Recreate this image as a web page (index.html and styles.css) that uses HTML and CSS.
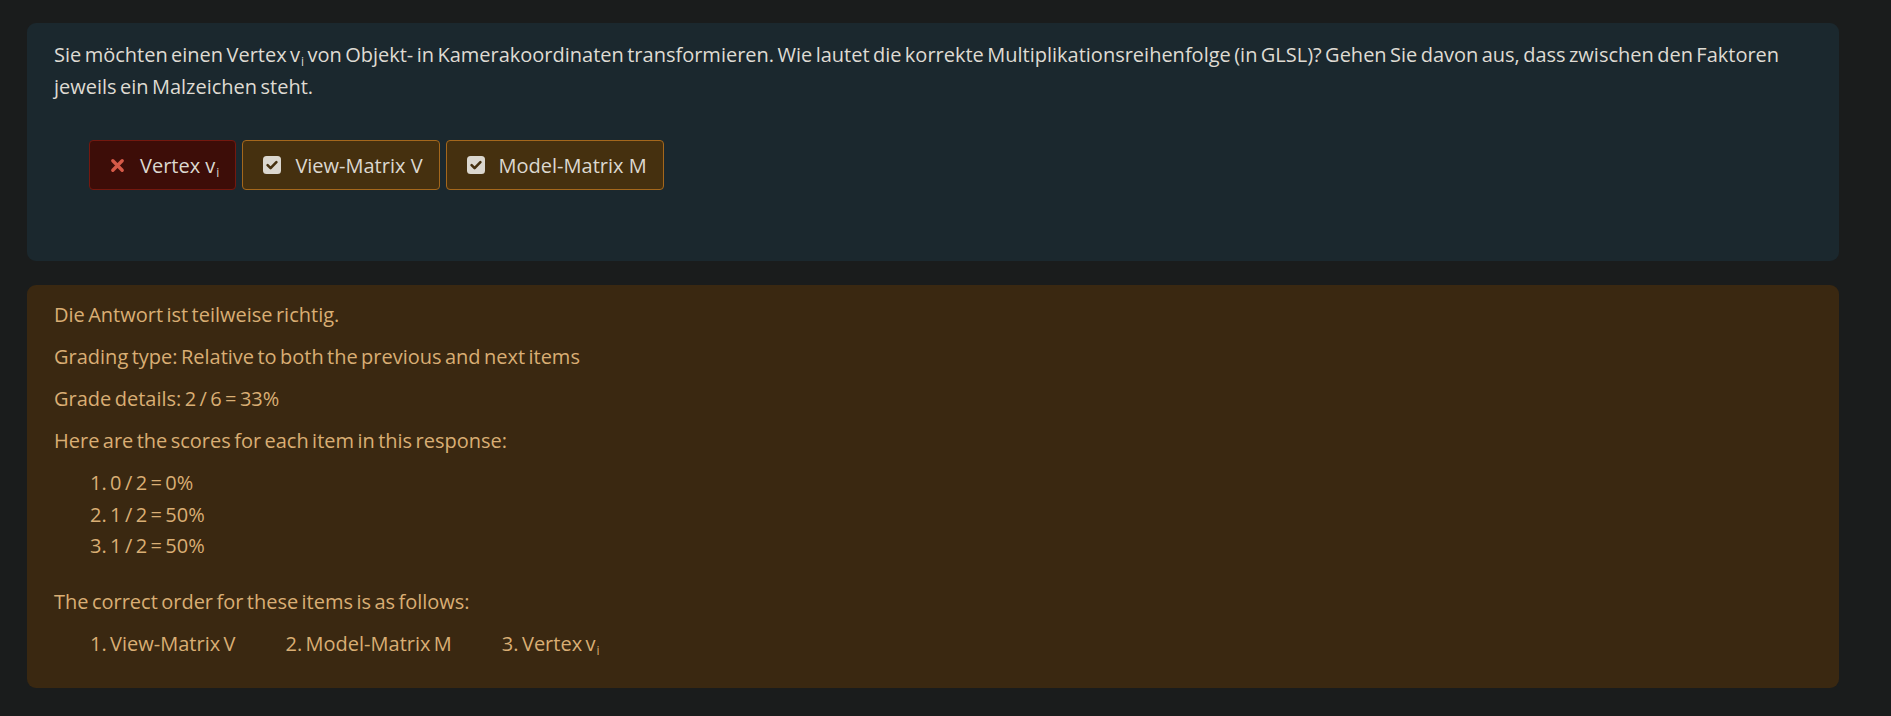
FILE: index.html
```html
<!DOCTYPE html>
<html lang="de">
<head>
<meta charset="utf-8">
<title>Reihenfolge-Frage</title>
<link rel="stylesheet" href="styles.css">
</head>
<body>
<main class="page">
  <section class="question">
    <p class="prompt">Sie möchten einen Vertex v<sub>i</sub> von Objekt- in Kamerakoordinaten transformieren. Wie lautet die korrekte Multiplikationsreihenfolge (in GLSL)? Gehen Sie davon aus, dass zwischen den Faktoren jeweils ein Malzeichen steht.</p>
    <div class="answers">
      <div class="item item-wrong">
        <svg class="icon icon-x" viewBox="0 0 16 16" aria-hidden="true"><path d="M3 3 L13 13 M13 3 L3 13" stroke="currentColor" stroke-width="3.6" stroke-linecap="round"/></svg>
        <span>Vertex v<sub>i</sub></span>
      </div>
      <div class="item item-right">
        <svg class="icon icon-check" viewBox="0 0 18 18" aria-hidden="true"><rect x="0" y="0" width="18" height="18" rx="3.5" fill="currentColor"/><path d="M4.6 9.2 L7.6 12.2 L13.4 6.2" fill="none" stroke="#45300f" stroke-width="2.6" stroke-linecap="round" stroke-linejoin="round"/></svg>
        <span>View-Matrix V</span>
      </div>
      <div class="item item-right">
        <svg class="icon icon-check" viewBox="0 0 18 18" aria-hidden="true"><rect x="0" y="0" width="18" height="18" rx="3.5" fill="currentColor"/><path d="M4.6 9.2 L7.6 12.2 L13.4 6.2" fill="none" stroke="#45300f" stroke-width="2.6" stroke-linecap="round" stroke-linejoin="round"/></svg>
        <span>Model-Matrix M</span>
      </div>
    </div>
  </section>

  <section class="feedback">
    <p>Die Antwort ist teilweise richtig.</p>
    <p>Grading type: Relative to both the previous and next items</p>
    <p>Grade details: 2 / 6 = 33%</p>
    <p>Here are the scores for each item in this response:</p>
    <ol class="scores">
      <li>0 / 2 = 0%</li>
      <li>1 / 2 = 50%</li>
      <li>1 / 2 = 50%</li>
    </ol>
    <p>The correct order for these items is as follows:</p>
    <ol class="order">
      <li>View-Matrix V</li>
      <li>Model-Matrix M</li>
      <li>Vertex v<sub>i</sub></li>
    </ol>
  </section>
</main>
</body>
</html>
```

FILE: styles.css
```css
html, body {
  margin: 0;
  padding: 0;
  background: #1a1c1c;
}

body {
  font-family: "Open Sans", "Noto Sans", sans-serif;
  font-size: 20px;
  word-spacing: -1.8px;
  color: #dedad2;
}

.page {
  padding: 23px 52px 29px 27px;
  display: flex;
  flex-direction: column;
  gap: 24px;
}

sub {
  font-size: 0.6em;
  vertical-align: -0.35em;
  line-height: 0;
  margin-left: 1px;
}

.question {
  background: #1b282e;
  border-radius: 9px;
  padding: 16px 28px 16px 27px;
}

.prompt {
  margin: 0;
  line-height: 32px;
  color: #dfdbd3;
}

.answers {
  display: flex;
  gap: 6px;
  margin: 37px 0 55px 35px;
}

.item {
  display: flex;
  align-items: center;
  height: 50px;
  box-sizing: border-box;
  padding: 0 16px 0 20px;
  border-radius: 4px;
  border: 1px solid;
  color: #dcd8d0;
  word-spacing: 0;
}

.item-wrong {
  background: #3d0d08;
  border-color: #74180f;
  gap: 15px;
}

.item-right {
  background: #45300f;
  border-color: #a4671c;
  gap: 14px;
}

.icon-x {
  width: 15px;
  height: 15px;
  color: #d65a48;
}

.icon-check {
  width: 18px;
  height: 18px;
  color: #dbd7cf;
}

.feedback {
  background: #3a2811;
  border-radius: 9px;
  padding: 14px 28px 28px 27px;
  color: #d9ae74;
}

.feedback p {
  margin: 10px 0;
  line-height: 32px;
}

.feedback p:first-child {
  margin-top: 0;
}

.scores {
  margin: 10px 0 24px;
  padding: 0 0 0 36px;
  list-style-position: inside;
}

.scores li {
  line-height: 31.5px;
}

.order {
  list-style: none;
  margin: 10px 0 0;
  padding: 0 0 0 36px;
  display: flex;
  gap: 50px;
  line-height: 32px;
  counter-reset: ord;
}

.order li {
  counter-increment: ord;
}

.order li::before {
  content: counter(ord) ". ";
}
```
